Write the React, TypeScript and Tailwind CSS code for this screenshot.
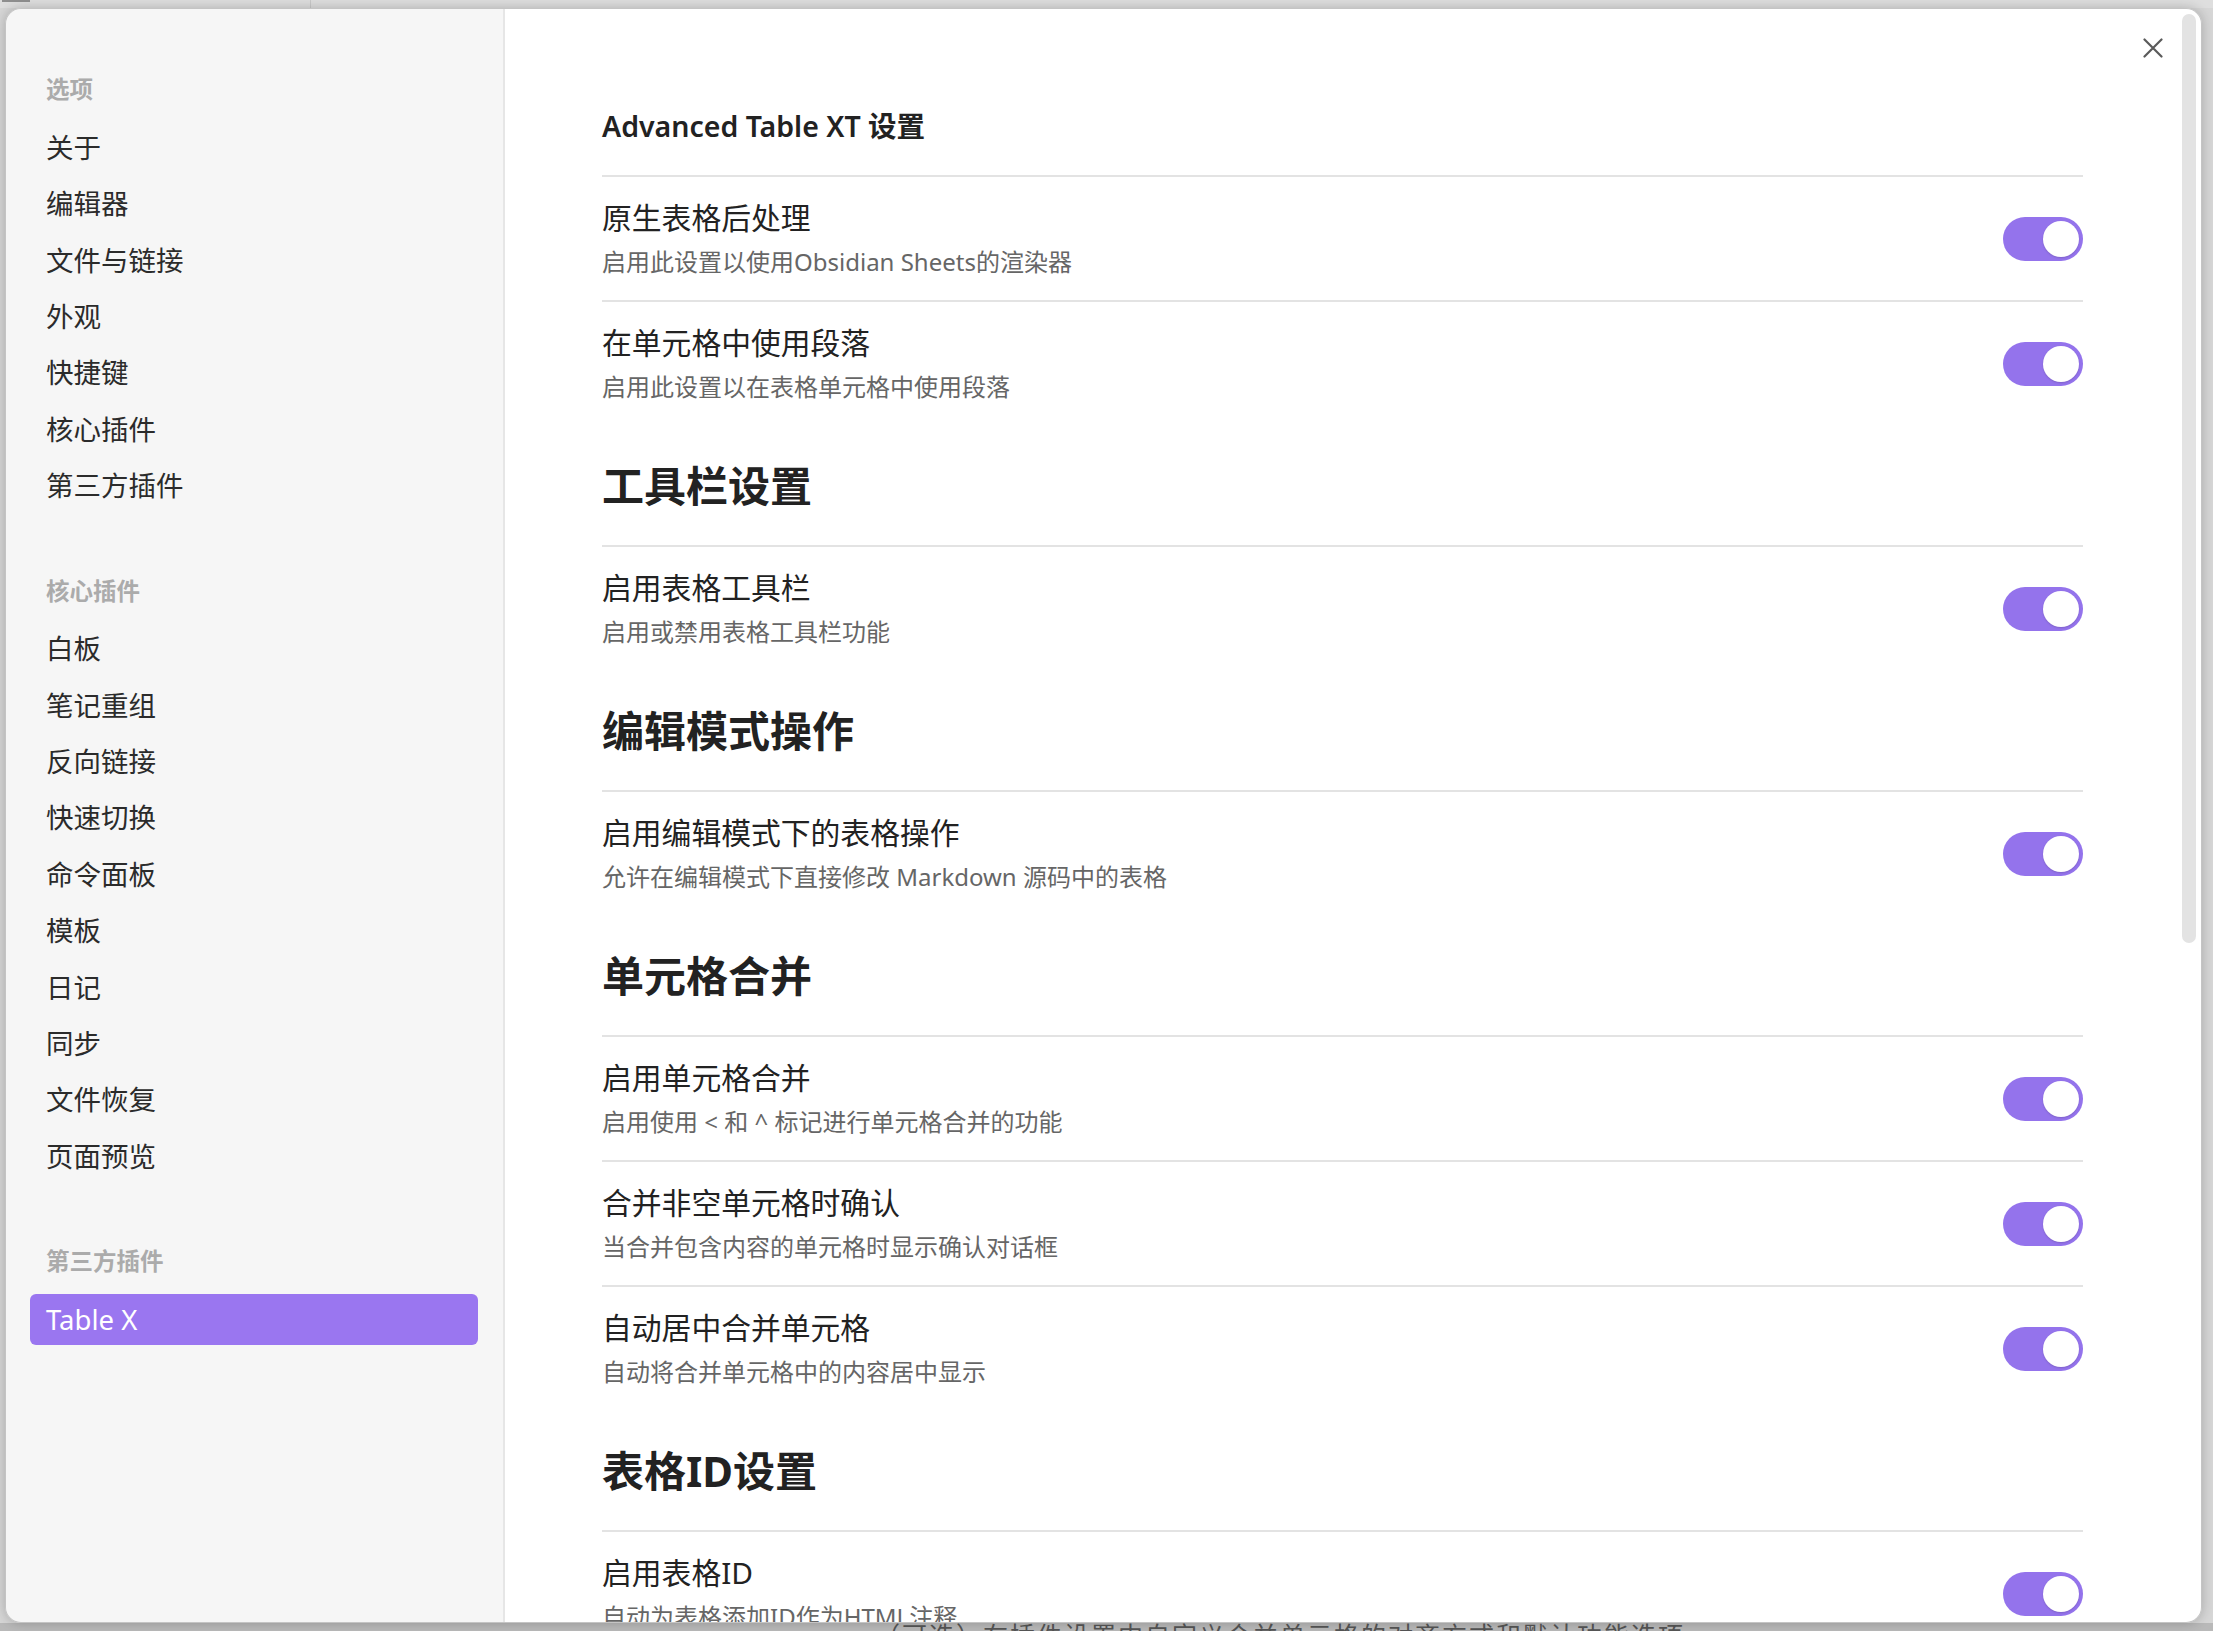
const font = "font-['Noto_Sans','Noto_Sans_CJK_SC',sans-serif]"

const navGroups = [
  { title: '选项', items: ['关于', '编辑器', '文件与链接', '外观', '快捷键', '核心插件', '第三方插件'] },
  {
    title: '核心插件',
    items: ['白板', '笔记重组', '反向链接', '快速切换', '命令面板', '模板', '日记', '同步', '文件恢复', '页面预览'],
  },
  { title: '第三方插件', items: ['Table X'] },
]

type Block =
  | { kind: 'heading'; text: string }
  | { kind: 'setting'; name: string; desc: string }

const blocks: Block[] = [
  { kind: 'setting', name: '原生表格后处理', desc: '启用此设置以使用Obsidian Sheets的渲染器' },
  { kind: 'setting', name: '在单元格中使用段落', desc: '启用此设置以在表格单元格中使用段落' },
  { kind: 'heading', text: '工具栏设置' },
  { kind: 'setting', name: '启用表格工具栏', desc: '启用或禁用表格工具栏功能' },
  { kind: 'heading', text: '编辑模式操作' },
  { kind: 'setting', name: '启用编辑模式下的表格操作', desc: '允许在编辑模式下直接修改 Markdown 源码中的表格' },
  { kind: 'heading', text: '单元格合并' },
  { kind: 'setting', name: '启用单元格合并', desc: '启用使用 < 和 ^ 标记进行单元格合并的功能' },
  { kind: 'setting', name: '合并非空单元格时确认', desc: '当合并包含内容的单元格时显示确认对话框' },
  { kind: 'setting', name: '自动居中合并单元格', desc: '自动将合并单元格中的内容居中显示' },
  { kind: 'heading', text: '表格ID设置' },
  { kind: 'setting', name: '启用表格ID', desc: '自动为表格添加ID作为HTML注释' },
]

function Toggle() {
  return (
    <div className="w-[80px] h-[44px] shrink-0 rounded-full bg-[#9473ec] flex items-center justify-end pr-[4px]">
      <div className="w-[36px] h-[36px] rounded-full bg-white shadow-[0_1px_2px_rgba(0,0,0,0.15)]" />
    </div>
  )
}

function Sidebar() {
  return (
    <aside className="w-[499px] shrink-0 bg-[#f6f6f6] border-r-2 border-[#e6e6e6] pt-[61px] pl-[24px] pr-[25px] flex flex-col gap-[60px]">
      {navGroups.map((group) => (
        <div key={group.title} className="flex flex-col gap-[5.4px]">
          <div className="h-[40px] mb-[6.6px] pl-[16px] flex items-center text-[23.5px] font-bold text-[#ababab]">
            {group.title}
          </div>
          {group.items.map((item) => {
            const active = item === 'Table X'
            return (
              <div
                key={item}
                className={`h-[51px] pl-[16px] flex items-center rounded-[6px] text-[27.5px] ${
                  active ? 'bg-[#9a76f0] text-white' : 'text-[#2b2b2b]'
                }`}
              >
                {item}
              </div>
            )
          })}
        </div>
      ))}
    </aside>
  )
}

function SettingRow({ name, desc }: { name: string; desc: string }) {
  return (
    <div className="h-[125px] border-t-2 border-[#e3e3e3] flex items-center justify-between">
      <div className="flex flex-col">
        <div className="text-[29.8px] leading-[40px] text-[#222]">{name}</div>
        <div className="mt-[7px] text-[24px] leading-[34px] text-[#666]">{desc}</div>
      </div>
      <Toggle />
    </div>
  )
}

function Content() {
  return (
    <main className="flex-1 bg-white pl-[97px] pt-[97px] overflow-hidden">
      <div className="w-[1481px]">
        <h1 className="text-[28.5px] leading-[40px] font-semibold text-[#222] mb-[29px]">
          Advanced Table XT 设置
        </h1>
        {blocks.map((b, i) =>
          b.kind === 'heading' ? (
            <div key={i} className="h-[120px] flex items-center text-[42px] font-bold text-[#222]">
              {b.text}
            </div>
          ) : (
            <SettingRow key={i} name={b.name} desc={b.desc} />
          ),
        )}
      </div>
    </main>
  )
}

export default function App() {
  return (
    <div className={`${font} w-full h-[1631px] bg-[#d6d6d6] flex flex-col overflow-hidden`}>
      <div className="h-[8px] shrink-0 bg-[#dedede] flex">
        <div className="w-[28px] h-[2px] ml-[2px] bg-[#8f8f8f]" />
        <div className="w-px h-full ml-[280px] bg-[#c9c9c9]" />
      </div>

      <div className="flex-1 flex pl-[5px] pr-[11px] min-h-0">
        <div className="relative flex-1 flex rounded-[16px] border border-[#c4c4c4] overflow-hidden shadow-[0_0_12px_rgba(0,0,0,0.22)]">
          <Sidebar />
          <Content />

          <button className="absolute top-[29px] right-[38px] w-[20px] h-[20px]" aria-label="关闭">
            <svg viewBox="0 0 20 20" className="w-[20px] h-[20px]" fill="none" stroke="#5a5a5a" strokeWidth="2.2" strokeLinecap="round">
              <path d="M1.5 1.5 18.5 18.5M18.5 1.5 1.5 18.5" />
            </svg>
          </button>

          <div className="absolute top-[5px] right-[5px] w-[14px] h-[929px] rounded-full bg-[#e3e3e3]" />
        </div>
      </div>

      <div className="h-[8px] shrink-0 bg-[#b9b9b9] overflow-hidden">
        <div className="ml-[875px] mt-[-5px] text-[25px] leading-[34px] tracking-[2px] text-[#555] whitespace-nowrap">
          （可选）在插件设置中自定义合并单元格的对齐方式和默认功能选项
        </div>
      </div>
    </div>
  )
}
